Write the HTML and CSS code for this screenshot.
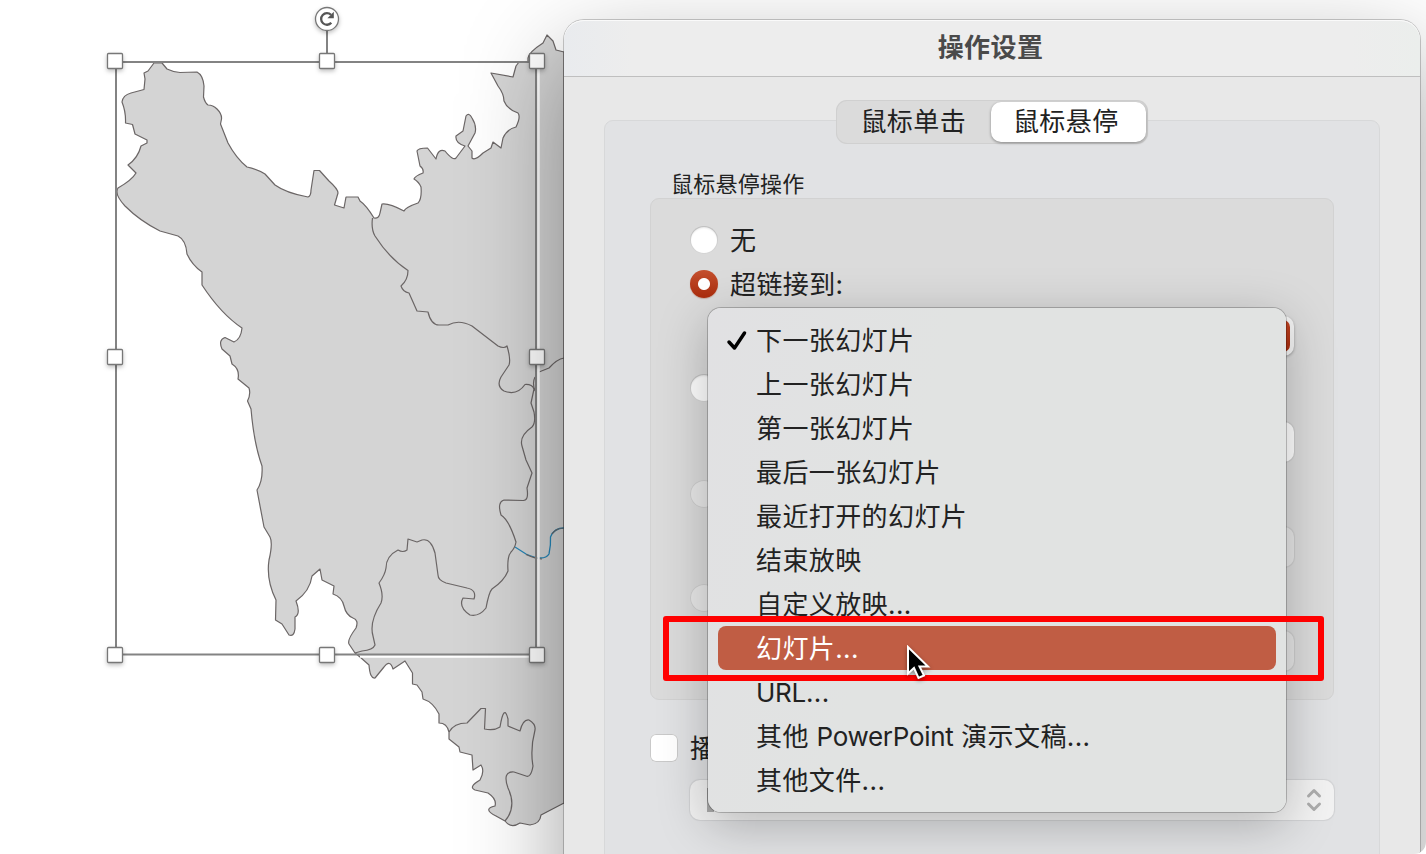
FILE: index.html
```html
<!DOCTYPE html>
<html lang="zh-CN">
<head>
<meta charset="utf-8">
<title>操作设置</title>
<link rel="stylesheet" href="styles.css">
</head>
<body>
<main class="desktop">
  <svg class="slide" width="1426" height="854" viewBox="0 0 1426 854">
    <g class="region">
      <path d="M154 63H162L167 69Q173 72 180 72.5L197 72Q203 75 204 86L203.500 97Q205 103 208 105Q213 105 217 109Q222 114 221.500 119L220.500 124L228 143Q236 158 247 167Q257 169 265 174L275 185Q286 193 308 197Q311 196 311 190L314 170.500H319.500L329 181Q338 189 338 193L334.500 205L344 208L346 197H358L360 201Q366 205 374 218Q379 219 380 213L382 204Q389 203 404 211Q406 207 418 203Q422 199 421 187Q419 182 414 179Q415 176 423 173Q424 169 420 166L417 151Q418 148 427.500 148L436 159Q438 148 445 151Q453 161 456 158L465 146Q455 143 456 136L463 131Q465 121 466 116Q469 112 472 118Q477 126 475 133L468 146L472 151V158Q475 161 483 153L491 148L493 142L501 148L503 138Q507 129 516 127Q521 117 518 113Q507 109 504 101Q504 94 498 86L491 73L513 77L516 66L519 62H528V58Q529 52 543 43L547 35L553 41L556 50L564 52V803L541 815Q540 824 530 825L520 823Q511 829 505 821L496 816Q482 809 495 806Q497 799 488 793L475 790Q468 787 480 780Q485 771 481 765L473 770L472 755L460 752L459 747L449 739V732Q447 723 439 723V714Q433 702 423 699L422 692L417 685L412.500 684V673L405 661L393 669Q390 659 384 667L375 678Q370 679 369 665L360 657L355 653L349 644Q347 640 356 628Q359 620 353 618Q346 615 344 606Q342 597 333 594L334 586L322 580L320 569L312 576Q310 591 296 601Q301 614 295 617V629Q294 637 289 635L282 624L275.500 620L276 600Q266 580 269 560Q273 543 270 537L264 527L257 490Q263 481 262 466Q254 444 251 409L247.500 401Q251 394 249 388L238 379Q240 369 232 364L230 356L222 349Q218 340 225 337.500L234 342Q241 339 242 328Q221 314 202 285V272Q192 265 187 254Q186 240 178 236L160 231Q140 221 125 206Q114 194 118 188Q132 180 136 173L128 165Q138 158 141 146L147 143V140L135 134L132.500 124.500L125.500 123Q126 112 122 102Q123 95 131 93L144 89.500L145 79L144 73L148 71Z"/>
      <path class="inner" d="M372.500 218Q371 229 375 236Q389 258 408 270.500Q408 280 401 286Q403 292 409 293L417 311L428 312Q431 325 439 325H448Q459 319 472 326L498 346Q504 349 507 346Q511 359 509 365L501 377Q496 386 504 391Q517 396 525 384.500Q532 384 534 389L531 403L534 412Q536 423 532 427Q519 436 522 446L526 460L532 473L527 488Q529 501 523 500.500L504 500Q497 502 501 515Q509 520 516 542Q515 548 511 552Q507 557 508 571Q504 581 492 589Q489 592 486 608Q479 617 470 615Q458 607 463 598L474 599Q477 590 467 588L446 583Q438 580 438 575L435 553Q431 538 422 540L417 542L408 539L407 550Q403 553 398 550Q386 556 386 568Q385 575 379 583Q384 595 381 603Q369 622 373 636L375 645Q373 650 362 651L355 653"/>
      <path class="inner" d="M539 372L549 368Q557 359 564 358M535 377Q532 383 535 391M449 732Q454 723 467 723L481 708.500H485.500L484.500 729Q494 731 500 727Q504 703 508 719V726L520 731Q523 719 529 720Q536 724 535 730Q530 749 533 766Q531 778 526 776L514 772Q502 771 508 788Q517 807 505 821"/>
      <path class="inner river" d="M515 547L526 554Q544 562 549 554Q551 545 550.500 537Q554 528 564 528"/>
      <path class="inner" d="M526 554.500Q536 559 542 559M552 534Q556 528 564 528"/>
    </g>
    <path class="halo" d="M538.500 62V656M360 656.500H538"/>
    <path class="outline" d="M116 62H536V654.500H116ZM327 31V62"/>
    <g class="handles">
      <rect x="107.500" y="53.500" width="15" height="15" rx="1"/>
      <rect x="319.500" y="53.500" width="15" height="15" rx="1"/>
      <rect x="529.500" y="53.500" width="15" height="15" rx="1"/>
      <rect x="107.500" y="349.500" width="15" height="15" rx="1"/>
      <rect x="529.500" y="349.500" width="15" height="15" rx="1"/>
      <rect x="107.500" y="647.500" width="15" height="15" rx="1"/>
      <rect x="319.500" y="647.500" width="15" height="15" rx="1"/>
      <rect x="529.500" y="647.500" width="15" height="15" rx="1"/>
      <circle cx="327" cy="19" r="11.500"/>
    </g>
    <path class="rotate" d="M331.300 22.800A5.800 5.800 0 1 1 331 14.800"/>
    <path class="rotate-tip" d="M333.800 11.800V18.200H327.400Z"/>
  </svg>

  <section class="dialog">
    <header class="titlebar">操作设置</header>
    <div class="content">
      <div class="tabs">
        <span class="tab">鼠标单击</span>
        <span class="tab active">鼠标悬停</span>
      </div>
      <div class="panel">
        <div class="caption">鼠标悬停操作</div>
        <div class="group">
          <div class="option"><i class="radio"></i><span>无</span></div>
          <div class="option"><i class="radio on"></i><span>超链接到:</span></div>
          <div class="field focus"><i></i></div>
          <div class="option"><i class="radio"></i></div>
          <div class="field plain"></div>
          <div class="option"><i class="radio off"></i></div>
          <div class="field dim"></div>
          <div class="option last"><i class="radio off"></i></div>
          <div class="field dim low"></div>
        </div>
        <div class="sound"><i class="check"></i><span>播</span></div>
        <div class="select">
          <i class="value"></i>
          <svg width="18" height="24" viewBox="0 0 18 24"><path d="M3.500 8L9 2.500L14.500 8M3.500 16L9 21.500L14.500 16"/></svg>
        </div>
      </div>
    </div>
  </section>

  <nav class="menu">
    <div class="item"><svg class="tick" width="22" height="22" viewBox="0 0 22 22"><path d="M3 12L8.500 18L18.500 3"/></svg>下一张幻灯片</div>
    <div class="item">上一张幻灯片</div>
    <div class="item">第一张幻灯片</div>
    <div class="item">最后一张幻灯片</div>
    <div class="item">最近打开的幻灯片</div>
    <div class="item">结束放映</div>
    <div class="item">自定义放映...</div>
    <div class="item selected">幻灯片...</div>
    <div class="item"><span class="latin">URL</span>...</div>
    <div class="item">其他 <span class="latin">PowerPoint</span> 演示文稿...</div>
    <div class="item">其他文件...</div>
  </nav>

  <div class="marker"></div>
  <svg class="cursor" width="28" height="38" viewBox="0 0 28 38"><path d="M2 2V28.500L8 23L12.500 33L18 30.500L13.500 21.500H22Z"/></svg>
</main>
</body>
</html>
```
FILE: styles.css
```css
body {
  margin: 0;
  background: #fff;
}

.desktop {
  position: relative;
  width: 1426px;
  height: 854px;
  overflow: hidden;
  border-radius: 0 0 12px 0;
  font: 26px/46px Inter, "Noto Sans CJK SC", sans-serif;
  letter-spacing: 0.4px;
  color: #222;
}

.slide { display: block; }
.region { fill: #d4d4d4; stroke: #6b6666; stroke-width: 1.2; stroke-linejoin: round; }
.inner { fill: none; }
.river { stroke: #2586b8; stroke-width: 1.300; }
.halo { fill: none; stroke: #fff; stroke-width: 2.500; }
.outline { fill: none; stroke: #838383; stroke-width: 2; }
.handles {
  fill: #fff;
  stroke: #777;
  stroke-width: 1.300;
  filter: drop-shadow(0 2px 2px rgba(0, 0, 0, 0.25));
}
.rotate { fill: none; stroke: #555; stroke-width: 2.300; }
.rotate-tip { fill: #555; }

.dialog {
  position: absolute;
  left: 564px;
  top: 20px;
  width: 856px;
  height: 940px;
  border-radius: 20px;
  background: #e8e8e8;
  box-shadow: 0 0 0 1px rgba(0, 0, 0, 0.2), 0 36px 100px rgba(0, 0, 0, 0.38);
}
.titlebar {
  height: 56px;
  padding-right: 3px;
  border-bottom: 1px solid #bfbfbf;
  border-radius: 20px 20px 0 0;
  background: linear-gradient(90deg, #e9ebee, #ededed 8%, #ededed 92%, #ebeeec);
  box-shadow: inset 0 1px 0 #fafafa;
  line-height: 56px;
  text-align: center;
  font-weight: 600;
  color: #4a4a4a;
}
.content {
  display: flex;
  flex-direction: column;
  align-items: center;
  padding: 23px 40px 0;
}
.tabs {
  z-index: 1;
  display: flex;
  box-sizing: border-box;
  width: 312px;
  height: 44px;
  padding: 2px;
  border-radius: 11px;
  background: #dbdbdb;
  box-shadow: inset 0 0 0 1px #d0d0d0;
}
.tab {
  flex: 1;
  box-sizing: border-box;
  padding-right: 2px;
  border-radius: 10px;
  line-height: 39px;
  text-align: center;
}
.tab.active {
  padding-right: 5px;
  background: #fff;
  box-shadow: 0 1px 3px rgba(0, 0, 0, 0.4);
}
.panel {
  align-self: stretch;
  box-sizing: border-box;
  height: 800px;
  margin-top: -24px;
  padding: 48px 45px 0;
  border: 1px solid #d7d8d9;
  border-radius: 9px;
  background: #e1e2e4;
}
.caption {
  height: 29px;
  padding-left: 21px;
  font-size: 22px;
  line-height: 30px;
  letter-spacing: 0.25px;
}
.group {
  box-sizing: border-box;
  height: 502px;
  padding: 19px 39px 0;
  border: 1px solid #d2d2d2;
  border-radius: 9px;
  background: #dbdbdb;
}
.option {
  display: flex;
  align-items: center;
  gap: 12px;
  height: 44px;
}
.option span, .sound span { padding-top: 2px; }
.radio {
  display: flex;
  flex: none;
  width: 28px;
  height: 28px;
  border-radius: 50%;
  background: #fff;
  box-shadow: inset 0 0 0 1px rgba(0, 0, 0, 0.17), inset 0 2px 2px rgba(0, 0, 0, 0.1);
}
.radio.on {
  background: radial-gradient(circle, #fff 5.500px, transparent 6.500px), linear-gradient(#c4502e, #ab2c0d);
  box-shadow: 0 1px 1px rgba(160, 60, 20, 0.3);
}
.radio.off { background: #e8e8e8; box-shadow: inset 0 0 0 1px #cecece; }
.field {
  box-sizing: border-box;
  width: 564px;
  height: 40px;
  margin: 10px 0 10px 40px;
  border-radius: 10px;
  background: #e6e6e6;
  box-shadow: 0 0 1px 1px rgba(0, 0, 0, 0.07);
}
.focus { padding: 4px; background: #f4f4f4; box-shadow: 0 1px 3px rgba(0, 0, 0, 0.3); }
.focus i { display: block; height: 32px; border-radius: 7px; background: linear-gradient(#c04422, #a92c0e); }
.plain { margin-top: 12px; background: #fff; }
.dim { margin: 11px 0 9px 40px; }
.low { margin-bottom: 0; }
.sound {
  display: flex;
  align-items: center;
  gap: 12px;
  height: 44px;
  margin-top: 26px;
}
.check {
  width: 28px;
  height: 28px;
  border-radius: 6px;
  background: #fff;
  box-shadow: inset 0 0 0 1px #c9c9c9;
}
.select {
  display: flex;
  align-items: center;
  justify-content: space-between;
  box-sizing: border-box;
  height: 40px;
  margin: 10px 0 0 40px;
  padding: 0 11px 0 17px;
  border-radius: 10px;
  background: #f2f2f2;
  box-shadow: 0 0 1px 1px rgba(0, 0, 0, 0.07);
}
.value { width: 7px; height: 24px; background: #aaa; }
.select svg { fill: none; stroke: #adadad; stroke-width: 3; stroke-linecap: round; stroke-linejoin: round; }

.menu {
  position: absolute;
  left: 708px;
  top: 308px;
  box-sizing: border-box;
  width: 578px;
  height: 504px;
  padding: 10px;
  border-radius: 13px;
  background: linear-gradient(105deg, #e1e1e3, #e1e3e2 35%);
  box-shadow: 0 0 0 1px rgba(0, 0, 0, 0.22), 0 12px 50px rgba(0, 0, 0, 0.25);
}
.item {
  position: relative;
  height: 44px;
  padding-left: 38px;
  border-radius: 8px;
  white-space: pre;
}
.item.selected { background: #c05d44; color: #fff; }
.latin { letter-spacing: -0.3px; }
.tick {
  position: absolute;
  left: 8px;
  top: 12px;
  fill: none;
  stroke: #000;
  stroke-width: 3.500;
  stroke-linecap: round;
  stroke-linejoin: round;
}
.marker {
  position: absolute;
  left: 663px;
  top: 616px;
  box-sizing: border-box;
  width: 661px;
  height: 65px;
  border: 6px solid #f00;
  border-radius: 3px;
}
.cursor {
  position: absolute;
  left: 906px;
  top: 645px;
  fill: #000;
  stroke: #fff;
  stroke-width: 2;
  filter: drop-shadow(0 2px 2px rgba(0, 0, 0, 0.4));
}
```
